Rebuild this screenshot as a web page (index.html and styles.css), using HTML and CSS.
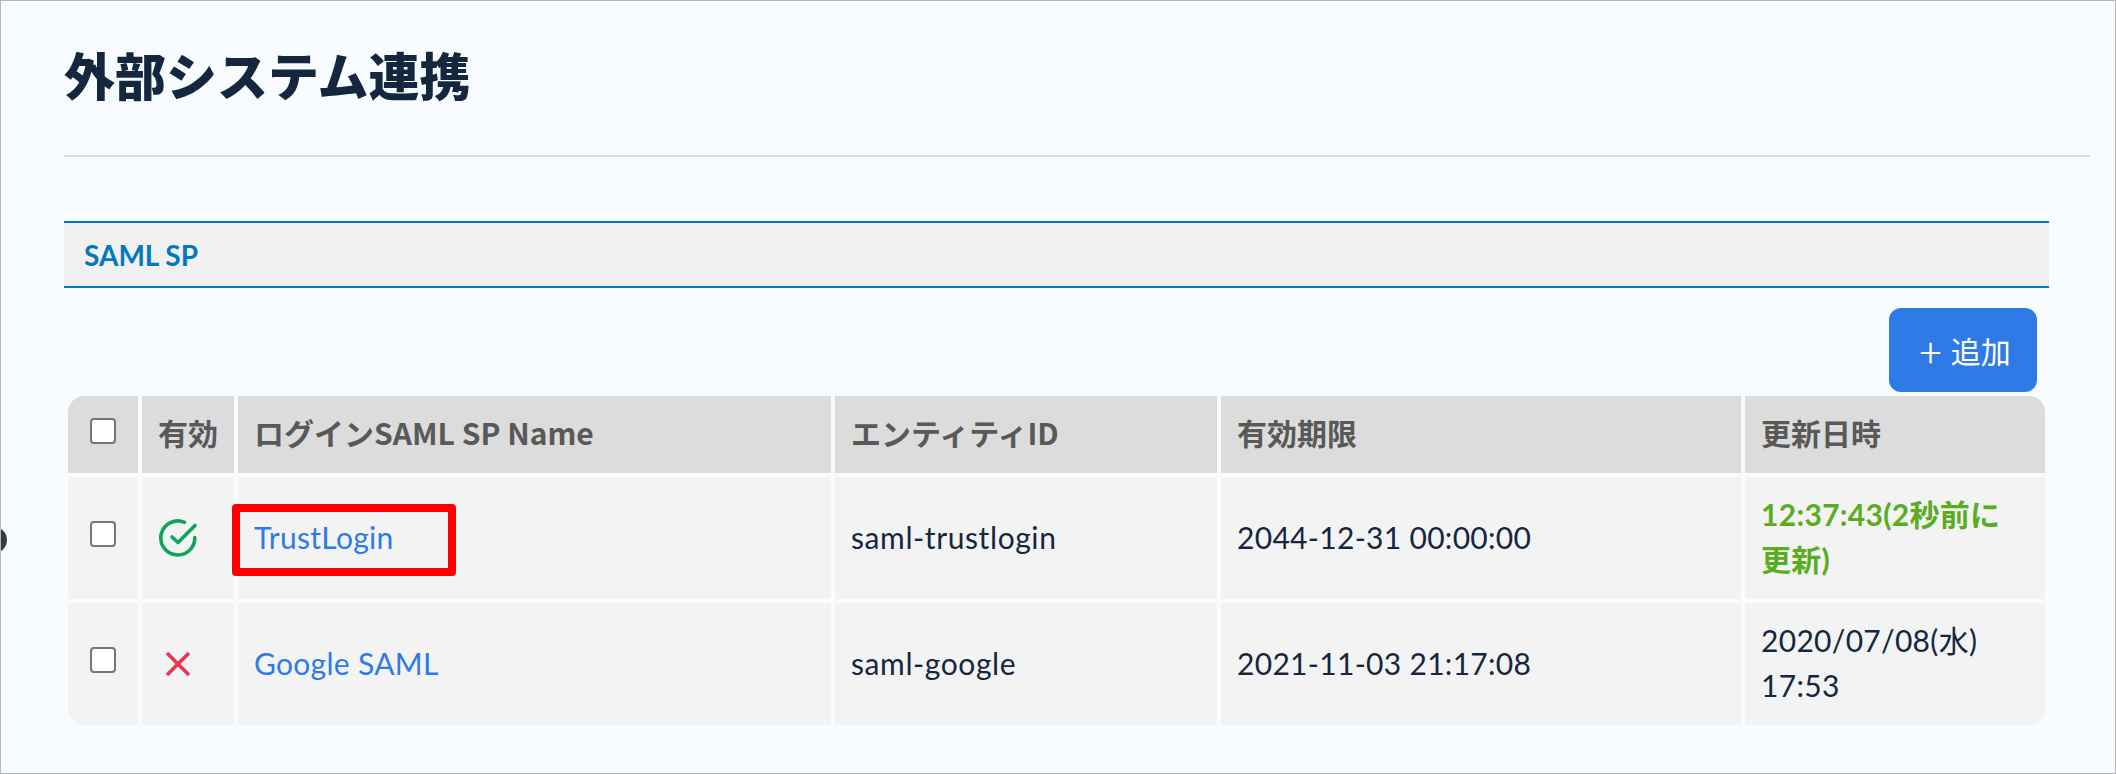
FILE: index.html
```html
<!DOCTYPE html>
<html lang="ja">
<head>
<meta charset="utf-8">
<title>外部システム連携</title>
<link rel="stylesheet" href="styles.css">
</head>
<body>
<div class="dot"></div>
<main class="page">
  <header class="page-head"><h1>外部システム連携</h1></header>
  <section class="panel">
    <h2 class="panel-title">SAML SP</h2>
    <div class="toolbar"><button class="add-btn" type="button"><span class="plus">+</span>追加</button></div>
    <div class="grid">
      <div class="th center-box"><input type="checkbox" class="check"></div>
      <div class="th">有効</div>
      <div class="th">ログインSAML SP Name</div>
      <div class="th">エンティティID</div>
      <div class="th">有効期限</div>
      <div class="th">更新日時</div>

      <div class="td center-box"><input type="checkbox" class="check"></div>
      <div class="td icon-cell">
        <svg width="40" height="40" viewBox="0 0 40 40" fill="none" stroke="#10a35b" stroke-width="3.6" stroke-linecap="round" stroke-linejoin="round"><path d="M36.8 19.5A17 17 0 1 1 26.5 4.3"/><path d="M14 19l6 5.5L37 7.5"/></svg>
      </div>
      <div class="td name-cell"><a href="#" class="link">TrustLogin</a><span class="highlight"></span></div>
      <div class="td id-cell">saml-trustlogin</div>
      <div class="td">2044-12-31 00:00:00</div>
      <div class="td fresh">12:37:43(2秒前に更新)</div>

      <div class="td center-box"><input type="checkbox" class="check"></div>
      <div class="td icon-cell">
        <svg width="40" height="40" viewBox="0 0 40 40" fill="none" stroke="#e8344f" stroke-width="3.6"><path d="M9 9l22 22M31 9L9 31"/></svg>
      </div>
      <div class="td"><a href="#" class="link">Google SAML</a></div>
      <div class="td id-cell">saml-google</div>
      <div class="td">2021-11-03 21:17:08</div>
      <div class="td">2020/07/08(水) 17:53</div>
    </div>
  </section>
</main>
</body>
</html>
```
FILE: styles.css
```css
* { box-sizing: border-box; }
html, body { margin: 0; height: 774px; overflow: hidden; }
body {
  background: #f8fbff;
  border: 1px solid #b4b6b8;
  position: relative;
  font-family: "Lato", "Noto Sans CJK JP", sans-serif;
  font-size: 30px;
  color: #14273f;
}
.dot {
  position: absolute;
  left: -20px;
  top: 526px;
  width: 26px;
  height: 26px;
  border-radius: 50%;
  background: #3a3a3a;
}
.page { padding: 0 25px 0 63px; }
.page-head {
  height: 156px;
  border-bottom: 2px solid #d5dfec;
}
h1 {
  margin: 0;
  padding-top: 40px;
  font-family: "Noto Sans CJK JP", sans-serif;
  font-size: 51px;
  line-height: 66px;
  font-weight: 900;
  color: #14273f;
}
.panel { margin-top: 64px; width: 1985px; }
.panel-title {
  margin: 0;
  height: 67px;
  padding-left: 20px;
  border-top: 2px solid #0079bd;
  border-bottom: 2px solid #0079bd;
  background: #f1f1f1;
  display: flex;
  align-items: center;
  font-family: "Lato", sans-serif;
  font-size: 28px;
  font-weight: 700;
  color: #0079bd;
}
.toolbar { display: flex; justify-content: flex-end; padding: 20px 12px 4px 0; }
.add-btn {
  width: 148px;
  height: 84px;
  padding: 0 0 0 4px;
  border: 0;
  border-radius: 12px;
  background: #2e7be8;
  color: #fff;
  font-family: "Noto Sans CJK JP", sans-serif;
  font-size: 30px;
  font-weight: 400;
  display: flex;
  align-items: center;
  justify-content: center;
}
.plus { margin-right: 9px; font-size: 42px; font-weight: 300; line-height: 1; }
.grid {
  display: grid;
  grid-template-columns: 70px 92px 593px 382px 520px 300px;
  grid-template-rows: 77px 122px 122px;
  gap: 4px;
  width: 1977px;
  margin-left: 4px;
  border-radius: 16px;
  overflow: hidden;
}
.th, .td {
  display: flex;
  align-items: center;
  padding: 0 16px 2px;
  line-height: 45px;
}
.th {
  padding: 0 8px 5px 16px;
  background: #dcdcdc;
  color: #595959;
  font-family: "Noto Sans CJK JP", sans-serif;
  font-size: 30px;
  font-weight: 700;
  white-space: nowrap;
}
.td { background: #f3f3f3; letter-spacing: 0.3px; }
.id-cell { letter-spacing: 0.6px; }
.center-box { justify-content: center; padding: 0; }
.check {
  appearance: none;
  width: 26px;
  height: 26px;
  margin: 0 0 8px;
  background: #fff;
  border: 2px solid #767676;
  border-radius: 4px;
}
.icon-cell { padding: 0 0 0 16px; }
.link { color: #2e7be8; text-decoration: none; }
.name-cell { position: relative; }
.highlight {
  position: absolute;
  left: -6px;
  top: 27px;
  width: 224px;
  height: 72px;
  border: 8px solid #ff0000;
  border-radius: 4px;
}
.fresh { padding-right: 30px; color: #5aad22; font-weight: 700; }
```
